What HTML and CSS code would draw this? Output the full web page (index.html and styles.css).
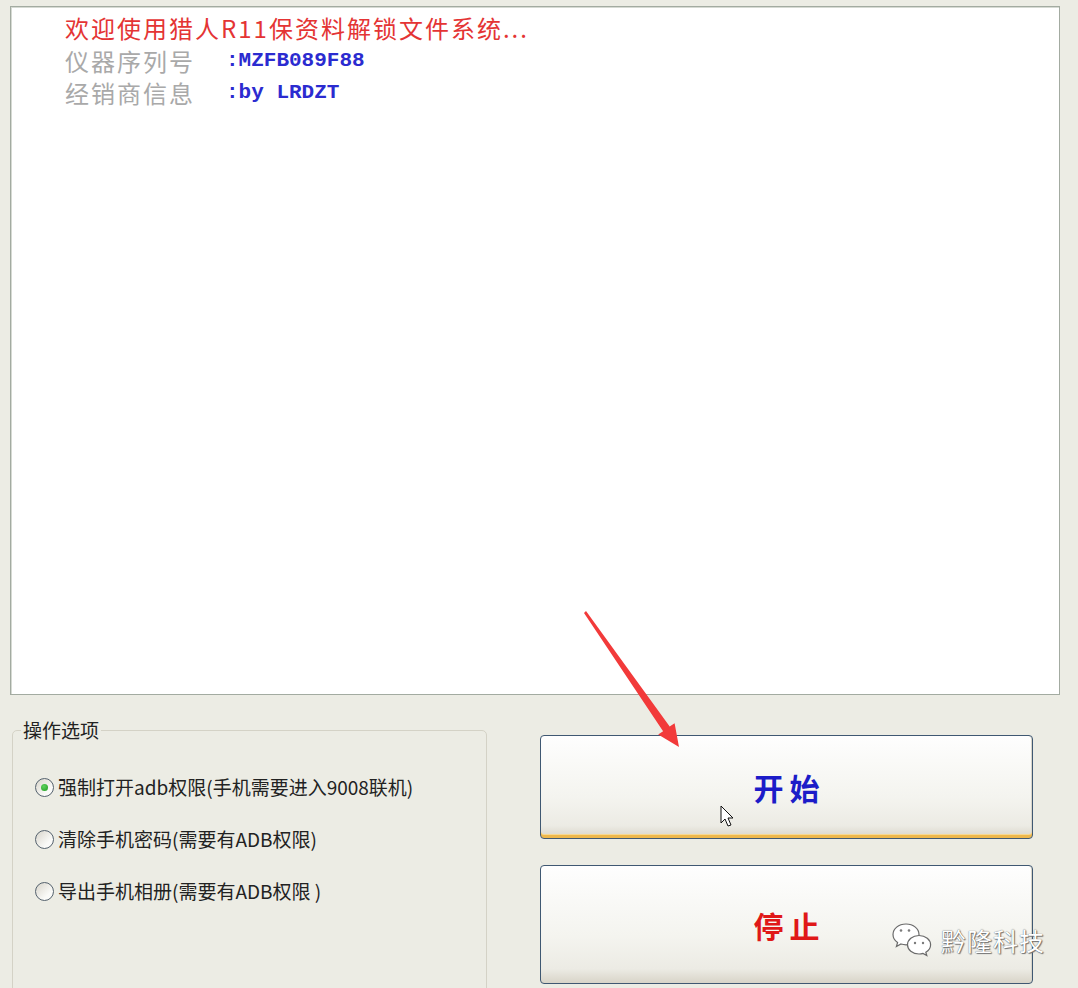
FILE: index.html
```html
<!DOCTYPE html>
<html>
<head>
<meta charset="utf-8">
<link rel="stylesheet" href="styles.css">
<title>猎人R11保资料解锁</title>
</head>
<body>
<div class="window">
  <div class="log">
    <p class="welcome">欢迎使用猎人R11保资料解锁文件系统...</p>
    <p class="info"><span class="label">仪器序列号</span><span class="value">:MZFB089F88</span></p>
    <p class="info"><span class="label">经销商信息</span><span class="value">:by LRDZT</span></p>
  </div>

  <div class="controls">
    <fieldset class="options">
      <legend>操作选项</legend>
      <div class="option-list">
        <label class="option"><span class="radio checked"></span>强制打开adb权限(手机需要进入9008联机)</label>
        <label class="option"><span class="radio"></span>清除手机密码(需要有ADB权限)</label>
        <label class="option"><span class="radio"></span>导出手机相册(需要有ADB权限 )</label>
      </div>
    </fieldset>

    <div class="actions">
      <button class="btn btn-start hover">开始</button>
      <button class="btn btn-stop">停止</button>
    </div>
  </div>

  <svg class="annot" width="1078" height="988" viewBox="0 0 1078 988">
    <polygon class="arrow" points="584,613 586,611 669.7,726.6 674.6,723.2 679,747 658.2,734.6 663.1,731.2"/>
    <path class="cursor" d="M721 806 L721 823 L725 819 L728 826 L731 825 L728 818 L733 818 Z"/>
  </svg>

  <div class="watermark">
    <svg class="wechat" width="40" height="36" viewBox="0 0 40 36">
      <path d="M14 2 C6.5 2 1 6.8 1 12.5 C1 15.8 2.8 18.6 5.6 20.5 L4.4 24.5 L9 22 C10.6 22.5 12.3 22.8 14 22.8 C21.5 22.8 27 18.2 27 12.5 C27 6.8 21.5 2 14 2 Z"/>
      <path d="M27 13.5 C20.4 13.5 15.5 17.8 15.5 22.8 C15.5 27.8 20.4 32 27 32 C28.4 32 29.8 31.8 31 31.4 L34.8 33.6 L33.8 30.2 C36.9 28.5 38.6 25.8 38.6 22.8 C38.6 17.8 33.6 13.5 27 13.5 Z"/>
      <circle class="eye" cx="9" cy="8.5" r="1.3"/>
      <circle class="eye" cx="17" cy="8.5" r="1.3"/>
      <circle class="eye" cx="23" cy="21" r="1.2"/>
      <circle class="eye" cx="31" cy="21" r="1.2"/>
    </svg>
    <span class="wm-text">黔隆科技</span>
  </div>
</div>
</body>
</html>
```

FILE: styles.css
```css
html, body {
  margin: 0;
  background-color: #ecece4;
  overflow: hidden;
}
body {
  font-family: "Noto Sans CJK SC", "Liberation Sans", sans-serif;
  color: #222;
}
.window {
  position: relative;
  width: 1078px;
  height: 988px;
  box-sizing: border-box;
  padding: 6px 18px 0 10px;
}

/* log box */
.log {
  height: 689px;
  box-sizing: border-box;
  background-color: #fff;
  border: 1px solid #a3aba1;
  box-shadow: inset 1px 1px 0 #d6dad3;
  padding: 5px 0 0 54px;
}
.log p {
  display: flex;
  align-items: center;
  margin: 0;
  height: 32.5px;
  font-size: 24px;
  line-height: 32px;
  white-space: nowrap;
}
.welcome {
  color: #e43434;
  letter-spacing: 2px;
}
.info .label {
  width: 161px;
  color: #a9a9a9;
  letter-spacing: 2px;
}
.info .value {
  font-family: "Liberation Mono", monospace;
  font-weight: bold;
  font-size: 21px;
  line-height: 24px;
  color: #2b2bd0;
}

/* lower area */
.controls {
  display: flex;
  gap: 53px;
  margin-top: 23px;
  padding-left: 2px;
}
.options {
  width: 475px;
  height: 300px;
  box-sizing: border-box;
  margin: 0;
  padding: 0 0 0 8px;
  border: 1px solid #d4d2c6;
  border-radius: 5px;
}
.options legend {
  padding: 0 2px;
  font-size: 19px;
  line-height: 24px;
  color: #222;
}
.option-list {
  display: flex;
  flex-direction: column;
  gap: 28px;
  padding: 33px 0 0 14px;
}
.option {
  display: flex;
  align-items: center;
  font-size: 19px;
  line-height: 24px;
  color: #222;
  white-space: nowrap;
}
.radio {
  width: 17px;
  height: 17px;
  margin-right: 4px;
  border: 1px solid #55626e;
  border-radius: 50%;
  background: linear-gradient(135deg, #d8d5cb, #fafaf8 70%);
  display: flex;
  align-items: center;
  justify-content: center;
}
.radio.checked::after {
  content: "";
  width: 7px;
  height: 7px;
  border-radius: 50%;
  background: radial-gradient(circle at 40% 35%, #5fd35f, #1e9a1e);
}

.actions {
  display: flex;
  flex-direction: column;
  gap: 26px;
  width: 493px;
  margin-top: 17px;
}
.btn {
  box-sizing: border-box;
  border: 1px solid #3f5872;
  border-radius: 4px;
  background: linear-gradient(#fefefe, #f4f4ef 60%, #ecebe4 88%, #d8d4c8);
  box-shadow: inset -1px 0 0 #d8d5ca;
  font-family: "Noto Sans CJK SC", sans-serif;
  font-size: 30px;
  font-weight: bold;
  letter-spacing: 6px;
  padding: 0 0 0 6px;
}
.btn-start {
  height: 104px;
  color: #1c1cc8;
}
.btn-start.hover {
  box-shadow: inset 0 -3px 0 #eeb84c, inset 0 -4px 0 #f8d890, inset -1px 0 0 #d8d5ca;
}
.btn-stop {
  height: 119px;
  color: #e01818;
}

/* overlays */
.annot {
  position: absolute;
  left: 0;
  top: 0;
  pointer-events: none;
}
.arrow {
  fill: #f23a3a;
}
.cursor {
  fill: #fff;
  stroke: #111;
  stroke-width: 1;
  stroke-linejoin: round;
}
.watermark {
  position: absolute;
  left: 892px;
  top: 922px;
  display: flex;
  align-items: center;
  gap: 9px;
  pointer-events: none;
}
.wechat path {
  fill: #fff;
  stroke: #6a6a6a;
  stroke-width: 1.2;
}
.wechat .eye {
  fill: #7a7a7a;
}
.wm-text {
  font-size: 25px;
  line-height: 36px;
  letter-spacing: 1px;
  color: #fff;
  text-shadow: 0 0 1px #444, 1px 1px 1px #777;
}
```
